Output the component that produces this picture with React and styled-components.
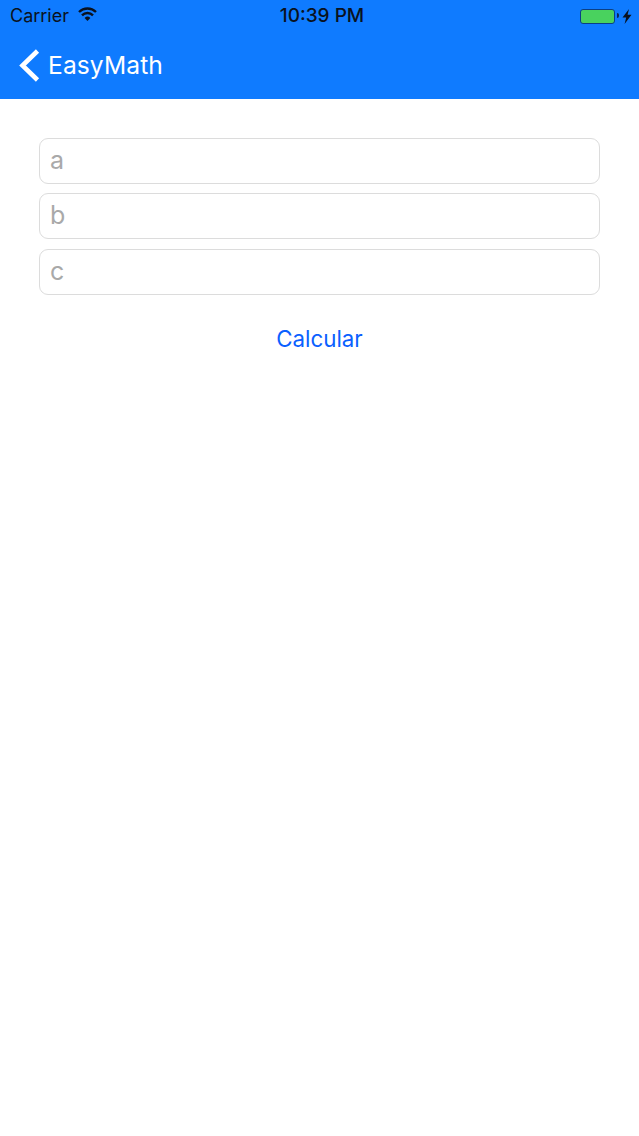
import React from "react";
import styled, { createGlobalStyle } from "styled-components";

const Global = createGlobalStyle`
  html, body { margin: 0; padding: 0; background: #fff; }
  body { font-family: Inter, "Liberation Sans", sans-serif; }
`;
const Page = styled.div`
  width: 639px; height: 1136px; background: #fff; display: flex; flex-direction: column; overflow: hidden;
`;
const Header = styled.header`
  height: 99px; background: #0f7bff; box-sizing: border-box; display: flex; flex-direction: column; flex: none;
`;
const StatusBar = styled.div`
  height: 32px; display: grid; grid-template-columns: 1fr auto 1fr; align-items: center; padding: 0 7px 0 10px; color: #0a1220;
`;
const StatusLeft = styled.div`display: flex; align-items: center; gap: 9px;`;
const Carrier = styled.span`font-size: 18px; line-height: 32px;`;
const Clock = styled.span`font-size: 19px; font-weight: 500; line-height: 32px; padding-left: 2px;`;
const StatusRight = styled.div`display: flex; justify-content: flex-end; align-items: center; gap: 7px;`;
const Battery = styled.div`
  width: 35px; height: 15px; box-sizing: border-box; border: 1.5px solid #0b3f86; border-radius: 3px; background: #49d25e; position: relative;
  &::after { content: ""; position: absolute; right: -5px; top: 3.5px; width: 2.5px; height: 5px; background: #0a2a55; border-radius: 0 2px 2px 0; }
`;
const NavBar = styled.nav`
  height: 67px; display: flex; align-items: center; padding: 0 0 0 19px; gap: 8px; color: #fff;
`;
const NavTitle = styled.span`font-size: 24.6px; line-height: 67px; letter-spacing: 0.1px;`;
const Form = styled.main`
  padding: 39px 39px 0; display: flex; flex-direction: column; gap: 9.33px;
`;
const Field = styled.input`
  width: 100%; height: 46px; box-sizing: border-box; border: 1px solid #dcdcdc; border-radius: 9px; padding: 0 10px 2px;
  font: 400 25px Inter, "Liberation Sans", sans-serif; background: #fff; outline: none;
  &::placeholder { color: #a9a9a9; opacity: 1; }
`;
const Action = styled.button`
  margin-top: 6px; height: 58px; border: 0; background: none; padding: 0; color: #0a60ff; font: 400 22.3px/58px Inter, "Liberation Sans", sans-serif; text-align: center;
`;

const Wifi = () => (
  <svg width="19" height="14" viewBox="0 0 19 14" style={{ marginTop: -4 }}>
    <path d="M1 5a12.2 12.2 0 0 1 17 0" fill="none" stroke="#0a1220" strokeWidth="2.4" />
    <path d="M4 8.3a7.8 7.8 0 0 1 11 0" fill="none" stroke="#0a1220" strokeWidth="2.4" />
    <path d="M6.6 11a4.2 4.2 0 0 1 5.8 0L9.5 14z" fill="#0a1220" />
  </svg>
);
const Bolt = () => (
  <svg width="10" height="15" viewBox="0 0 10 15"><path d="M7 0 0.5 8.6H4.2L2.6 15 9.5 5.8H5.6z" fill="#0a1220" /></svg>
);
const Chevron = () => (
  <svg width="21" height="33" viewBox="0 0 21 33">
    <path d="M18.5 2 3.5 16.5l15 14.5" fill="none" stroke="#fff" strokeWidth="4.6" />
  </svg>
);

export default function App() {
  return (
    <Page>
      <Global />
      <Header>
        <StatusBar>
          <StatusLeft><Carrier>Carrier</Carrier><Wifi /></StatusLeft>
          <Clock>10:39 PM</Clock>
          <StatusRight><Battery /><Bolt /></StatusRight>
        </StatusBar>
        <NavBar><Chevron /><NavTitle>EasyMath</NavTitle></NavBar>
      </Header>
      <Form>
        <Field placeholder="a" />
        <Field placeholder="b" />
        <Field placeholder="c" />
        <Action>Calcular</Action>
      </Form>
    </Page>
  );
}
